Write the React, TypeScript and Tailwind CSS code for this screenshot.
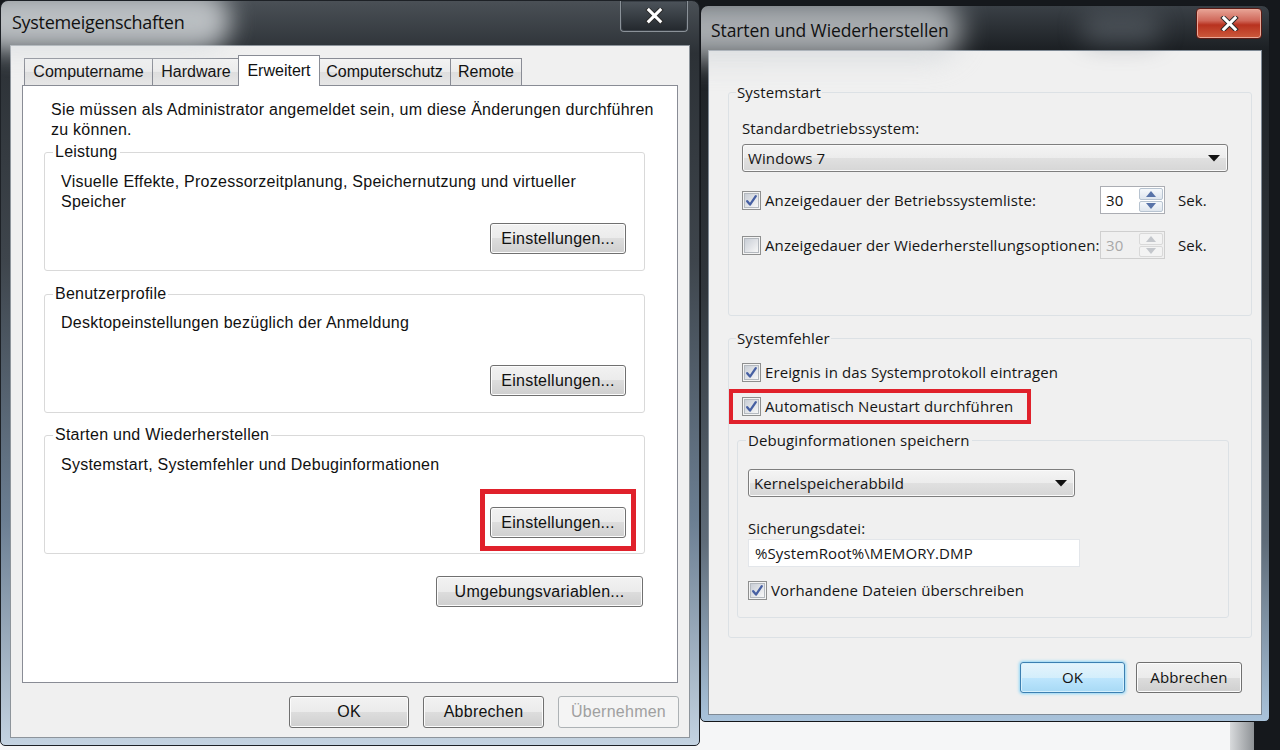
import React from "react";

const arial = "font-['Liberation_Sans',Arial,sans-serif]";
const segoe = "font-['Open_Sans','Noto_Sans',sans-serif]";

type Kind = "normal" | "default" | "disabled";

function Btn({ children, className = "", kind = "normal" }: { children: React.ReactNode; className?: string; kind?: Kind }) {
  const look =
    kind === "default"
      ? "border-[#3c7fb1] bg-[linear-gradient(#e5f4fc_0%,#d4eefb_50%,#bee6fd_50%,#a7d9f5_100%)] shadow-[0_0_3px_1px_#8fd6f7,inset_0_0_0_1px_#d6f1fd]"
      : kind === "disabled"
      ? "border-[#adb2b5] bg-[#f4f4f4] text-[#a0a0a0]"
      : "border-[#707070] bg-[linear-gradient(#f2f2f2_0%,#ebebeb_50%,#dddddd_50%,#cfcfcf_100%)] shadow-[inset_0_0_0_1px_#fcfcfc]";
  return (
    <button className={`flex shrink-0 items-center justify-center rounded-[3px] border text-[#111] ${look} ${className}`}>
      {children}
    </button>
  );
}

function Check({ on = false }: { on?: boolean }) {
  return (
    <span className="flex h-[19px] w-[19px] shrink-0 items-center justify-center border border-[#8e8f8f] bg-[#f4f4f4]">
      <span className="flex h-[15px] w-[15px] items-center justify-center border border-[#b4b9bf] bg-[linear-gradient(135deg,#c9ced6,#f7f7f7)]">
        {on && (
          <svg width="13" height="13" viewBox="0 0 13 13">
            <path d="M2.2 7.2 L5 10.6 L10.8 2.2" fill="none" stroke="#4760a3" strokeWidth="2.3" strokeLinejoin="round" strokeLinecap="round" />
          </svg>
        )}
      </span>
    </span>
  );
}

function Combo({ text, className = "" }: { text: string; className?: string }) {
  return (
    <div
      className={`flex h-[28px] items-center justify-between rounded-[3px] border border-[#7e7e7e] bg-[linear-gradient(#f4f4f4_0%,#ececec_50%,#e0e0e0_50%,#d6d6d6_100%)] pl-[5px] pr-[7px] shadow-[inset_0_0_0_1px_#fafafa] ${className}`}
    >
      <span>{text}</span>
      <svg width="12" height="7" viewBox="0 0 12 7">
        <polygon points="0,0 12,0 6,6.5" fill="#111" />
      </svg>
    </div>
  );
}

function Spin({ disabled = false }: { disabled?: boolean }) {
  const arrow = disabled ? "#c3c6cb" : "#5873a8";
  const btn = disabled
    ? "border-[#d9d9d9] bg-[#f3f3f3]"
    : "border-[#b7c3d0] bg-[linear-gradient(#f5f8fb,#dfe6ee)]";
  return (
    <div
      className={`flex h-[28px] w-[65px] shrink-0 border ${
        disabled ? "border-[#cfcfcf] bg-[#f0f0f0] text-[#a8a8a8]" : "border-[#abadb3] bg-white text-[#111]"
      }`}
    >
      <div className="flex flex-1 items-center pl-[5px]">30</div>
      <div className="flex w-[25px] flex-col gap-[1px] py-[1px] pr-[1px]">
        <div className={`flex flex-1 items-center justify-center rounded-[2px] border ${btn}`}>
          <svg width="10" height="6" viewBox="0 0 10 6">
            <polygon points="0,6 5,0 10,6" fill={arrow} />
          </svg>
        </div>
        <div className={`flex flex-1 items-center justify-center rounded-[2px] border ${btn}`}>
          <svg width="10" height="6" viewBox="0 0 10 6">
            <polygon points="0,0 10,0 5,6" fill={arrow} />
          </svg>
        </div>
      </div>
    </div>
  );
}

function CloseX({ size = 20 }: { size?: number }) {
  return (
    <svg width={size} height={size * 0.8} viewBox="0 0 20 16">
      <path d="M4 2 L16 14 M16 2 L4 14" stroke="#2a2a2a" strokeWidth="5.2" strokeLinecap="square" />
      <path d="M4 2 L16 14 M16 2 L4 14" stroke="#ffffff" strokeWidth="3.2" strokeLinecap="square" />
    </svg>
  );
}

function GroupL({ title, children, className = "" }: { title: string; children: React.ReactNode; className?: string }) {
  return (
    <fieldset className={`rounded-[3px] border border-[#d9d9d9] ${className}`}>
      <legend className="ml-[8px] px-[2px] leading-[20px]">{title}</legend>
      {children}
    </fieldset>
  );
}

function GroupR({ title, children, className = "" }: { title: string; children: React.ReactNode; className?: string }) {
  return (
    <fieldset className={`rounded-[3px] border border-[#dce1e5] ${className}`}>
      <legend className="ml-[7px] px-[1px] leading-[20px]">{title}</legend>
      {children}
    </fieldset>
  );
}

function LeftWindow() {
  const tabs = [
    { name: "Computername", w: "w-[129px]" },
    { name: "Hardware", w: "w-[88px]" },
    { name: "Erweitert", w: "w-[82px]", active: true },
    { name: "Computerschutz", w: "w-[133px]" },
    { name: "Remote", w: "w-[72px]" },
  ];
  return (
    <div className="absolute left-0 top-0 h-[746px] w-[700px] overflow-hidden rounded-t-[8px] rounded-b-[5px] border border-[#1d2126] bg-[linear-gradient(180deg,#4a5056_0%,#2c3136_7%,#3e454c_35%,#6c7f93_70%,#c4d3e1_100%)]">
      <div className="absolute left-[-30px] top-[-10px] h-[60px] w-[260px] rounded-full bg-[#d9dde0] opacity-80 blur-[12px]" />
      <div className="relative flex h-[44px] items-start justify-between pl-[11px] pr-[11px]">
        <span className={`${segoe} pt-[8px] text-[18px] tracking-[-0.3px] text-[#111]`}>Systemeigenschaften</span>
        <div className="flex h-[31px] w-[68px] items-center justify-center rounded-b-[4px] border border-t-0 border-[#8b9299] bg-[linear-gradient(#4d545b,#23282d)] shadow-[inset_0_0_0_1px_#3a4047]">
          <CloseX size={19} />
        </div>
      </div>
      <div className={`${arial} ml-[9px] flex h-[693px] w-[680px] flex-col border border-[#8d949b] bg-[#f0f0f0] px-[11px] pt-[9px] text-[16px] tracking-[0.25px] text-[#111]`}>
        <div className="flex h-[30px] items-end pl-[2px] tracking-normal">
          {tabs.map((t) =>
            t.active ? (
              <div
                key={t.name}
                className={`relative z-10 -mb-px -ml-[2px] -mr-[1px] flex h-[31px] ${t.w} items-start justify-center border border-b-0 border-[#898c95] bg-white pt-[3px]`}
              >
                {t.name}
              </div>
            ) : (
              <div
                key={t.name}
                className={`-ml-px flex h-[27px] first:ml-0 ${t.w} items-center justify-center whitespace-nowrap border border-b-0 border-[#898c95] bg-[linear-gradient(#f3f3f3_0%,#ebebeb_50%,#dedede_50%,#e6e6e6_100%)]`}
              >
                {t.name}
              </div>
            )
          )}
        </div>
        <div className="flex h-[598px] flex-col border border-[#898c95] bg-white pl-[21px] pr-[32px] pt-[14px]">
          <p className="whitespace-nowrap pl-[7px] leading-[20px]">
            Sie müssen als Administrator angemeldet sein, um diese Änderungen durchführen
            <br />
            zu können.
          </p>
          <GroupL title="Leistung" className="mt-[2px]">
            <div className="flex h-[108px] flex-col pb-[16px] pl-[16px] pr-[18px] pt-[10px]">
              <p className="whitespace-nowrap leading-[20px]">
                Visuelle Effekte, Prozessorzeitplanung, Speichernutzung und virtueller
                <br />
                Speicher
              </p>
              <Btn className="mt-auto h-[31px] w-[136px] self-end">Einstellungen...</Btn>
            </div>
          </GroupL>
          <GroupL title="Benutzerprofile" className="mt-[13px]">
            <div className="flex h-[108px] flex-col pb-[16px] pl-[16px] pr-[18px] pt-[9px]">
              <p className="leading-[20px]">Desktopeinstellungen bezüglich der Anmeldung</p>
              <Btn className="mt-auto h-[31px] w-[136px] self-end">Einstellungen...</Btn>
            </div>
          </GroupL>
          <GroupL title="Starten und Wiederherstellen" className="mt-[12px]">
            <div className="flex h-[108px] flex-col pb-[2px] pl-[16px] pr-[8px] pt-[10px]">
              <p className="leading-[20px]">Systemstart, Systemfehler und Debuginformationen</p>
              <div className="mt-auto self-end border-[5px] border-[#e0212b] px-[5px] pb-[8px] pt-[13px]">
                <Btn className="h-[31px] w-[136px]">Einstellungen...</Btn>
              </div>
            </div>
          </GroupL>
          <Btn className="mr-[2px] mt-[22px] h-[31px] w-[207px] self-end">Umgebungsvariablen...</Btn>
        </div>
        <div className="-mr-px mt-[13px] flex justify-end gap-[14px]">
          <Btn className="h-[32px] w-[120px]">OK</Btn>
          <Btn className="h-[32px] w-[121px]">Abbrechen</Btn>
          <Btn kind="disabled" className="h-[32px] w-[121px]">Übernehmen</Btn>
        </div>
      </div>
    </div>
  );
}

function RightWindow() {
  return (
    <div className="absolute left-[700px] top-[5px] h-[717px] w-[570px] overflow-hidden rounded-t-[8px] rounded-b-[5px] border border-[#14171b] bg-[linear-gradient(180deg,#3a4046_0%,#1c2024_6%,#30363c_40%,#5f6c79_75%,#a9c3db_100%)]">
      <div className="absolute left-[-40px] top-[-6px] h-[60px] w-[300px] rounded-full bg-[#d3d7da] opacity-75 blur-[14px]" />
      <div className="absolute left-[380px] top-[8px] h-[30px] w-[80px] rounded-full bg-[#6d757d] opacity-50 blur-[12px]" />
      <div className="relative flex h-[44px] items-start justify-between pl-[10px] pr-[7px]">
        <span className={`${segoe} pt-[11px] text-[17.5px] tracking-[-0.1px] text-[#111]`}>Starten und Wiederherstellen</span>
        <div className="mt-[2px] flex h-[31px] w-[66px] items-center justify-center rounded-[4px] border border-[#5a1a14] bg-[linear-gradient(#e8a597_0%,#d0685a_40%,#b8321f_55%,#cc5a3c_100%)] shadow-[inset_0_0_0_1px_#e9a898]">
          <CloseX size={19} />
        </div>
      </div>
      <div className={`${segoe} ml-[7px] flex h-[665px] w-[554px] flex-col border border-[#7f8a95] bg-[#f0f0f0] text-[15px] tracking-[0.1px] text-[#151515]`}>
        <GroupR title="Systemstart" className="ml-[19px] mt-[31px] w-[524px]">
          <div className="flex h-[213px] flex-col pl-[13px] pr-[23px] pt-[16px]">
            <div className="leading-[20px]">Standardbetriebssystem:</div>
            <Combo text="Windows 7" className="mt-[6px]" />
            <div className="mt-[14px] flex items-center">
              <div className="flex w-[358px] items-center gap-[4px]">
                <Check on />
                <span>Anzeigedauer der Betriebssystemliste:</span>
              </div>
              <Spin />
              <span className="ml-[13px]">Sek.</span>
            </div>
            <div className="mt-[17px] flex items-center">
              <div className="flex w-[358px] items-center gap-[4px]">
                <Check />
                <span className="whitespace-nowrap">Anzeigedauer der Wiederherstellungsoptionen:</span>
              </div>
              <Spin disabled />
              <span className="ml-[13px]">Sek.</span>
            </div>
          </div>
        </GroupR>
        <GroupR title="Systemfehler" className="ml-[19px] mt-[12px] w-[524px]">
          <div className="flex flex-col pb-[19px] pl-[13px] pt-[14px]">
            <div className="flex h-[20px] items-center gap-[4px]">
              <Check on />
              <span>Ereignis in das Systemprotokoll eintragen</span>
            </div>
            <div className="-ml-[13px] mt-[7px] w-[302px] border-4 border-[#e0212b] pb-[4px] pl-[9px] pt-[3px]">
              <div className="flex h-[20px] items-center gap-[4px]">
                <Check on />
                <span>Automatisch Neustart durchführen</span>
              </div>
            </div>
            <fieldset className="-ml-[5px] mt-[6px] w-[492px] rounded-[3px] border border-[#dce1e5]">
              <legend className="ml-[8px] px-[2px] leading-[20px]">Debuginformationen speichern</legend>
              <div className="flex flex-col pb-[17px] pl-[10px] pt-[19px]">
                <Combo text="Kernelspeicherabbild" className="w-[327px]" />
                <div className="mt-[21px] leading-[20px]">Sicherungsdatei:</div>
                <div className="mt-[1px] flex h-[28px] w-[332px] items-center border border-[#e3e6ea] bg-white pl-[6px]">
                  %SystemRoot%\MEMORY.DMP
                </div>
                <div className="mt-[13px] flex h-[20px] items-center gap-[4px]">
                  <Check on />
                  <span>Vorhandene Dateien überschreiben</span>
                </div>
              </div>
            </fieldset>
          </div>
        </GroupR>
        <div className="mt-[24px] flex justify-end gap-[11px] pr-[19px]">
          <Btn kind="default" className="h-[31px] w-[105px]">OK</Btn>
          <Btn className="h-[31px] w-[106px]">Abbrechen</Btn>
        </div>
      </div>
    </div>
  );
}

export default function App() {
  return (
    <div className="relative h-[750px] w-[1280px] overflow-hidden bg-[#15181c]">
      <div className="absolute left-0 top-[600px] h-[150px] w-[1250px] bg-[#f5f6f7]" />
      <div className="absolute left-[1230px] top-[600px] h-[150px] w-[24px] bg-[linear-gradient(90deg,#d8dadc,#8e9296)]" />
      <LeftWindow />
      <RightWindow />
    </div>
  );
}
